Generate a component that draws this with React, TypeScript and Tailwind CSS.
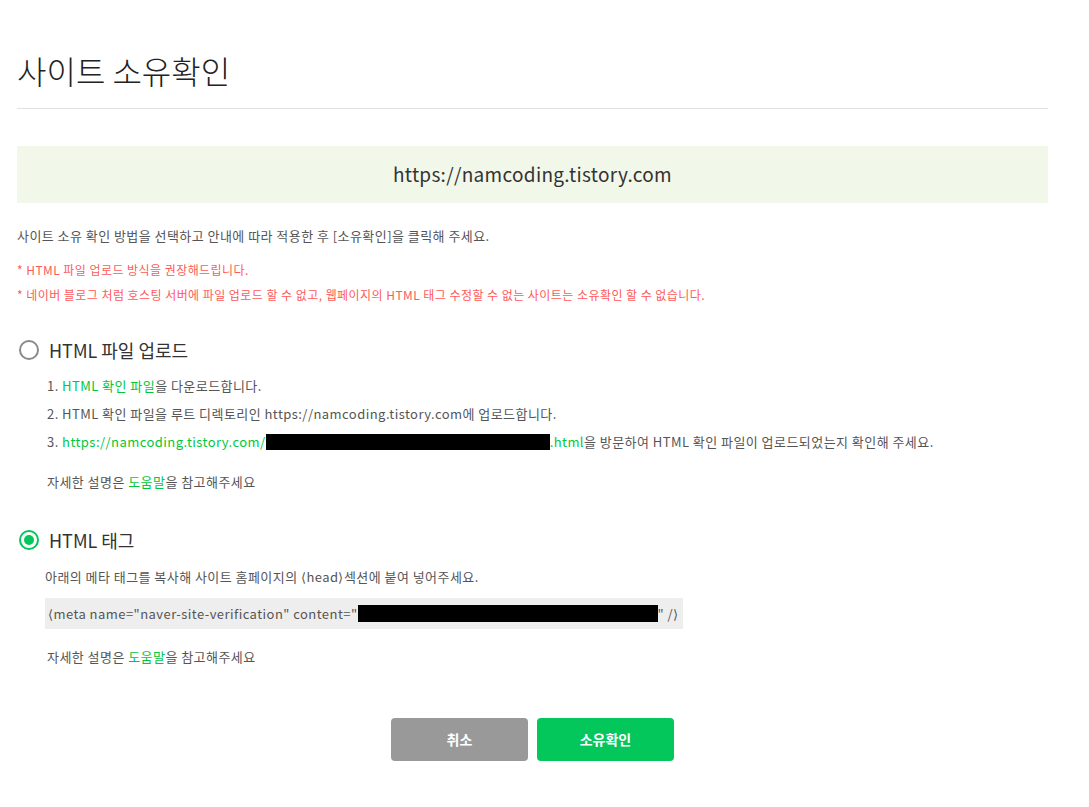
import React, { useState } from 'react';

type Method = 'file' | 'tag';

const SITE_URL = 'https://namcoding.tistory.com';

const Radio = ({ checked, onClick, label }: { checked: boolean; onClick: () => void; label: string }) => (
  <button onClick={onClick} className="flex items-center h-[24px] gap-[10px] pl-[2px]">
    {checked ? (
      <span className="w-[20px] h-[20px] rounded-full border-[2px] border-[#03c75a] flex items-center justify-center">
        <span className="w-[10px] h-[10px] rounded-full bg-[#03c75a]" />
      </span>
    ) : (
      <span className="w-[20px] h-[20px] rounded-full border-[2px] border-[#8a8a8a]" />
    )}
    <span className="text-[18px] text-[#333] leading-[24px]">{label}</span>
  </button>
);

const HelpLine = () => (
  <p className="text-[13px] leading-[20px] text-[#555] tracking-[0.45px]">
    자세한 설명은 <span className="text-[#00c73c]">도움말</span>을 참고해주세요
  </p>
);

export default function App() {
  const [method, setMethod] = useState<Method>('tag');

  return (
    <div
      className="bg-white min-h-screen pl-[17px] pr-[41px] pb-[40px]"
      style={{ fontFamily: '"Noto Sans CJK KR", "Noto Sans", sans-serif' }}
    >
      <div className="pt-[50px] pb-[18px] border-b border-[#e2e2e2]">
        <h1 className="text-[32px] leading-[40px] font-light text-[#222]">사이트 소유확인</h1>
      </div>

      <div className="mt-[37px] h-[57px] bg-[#f1f7e9] flex items-center justify-center">
        <span className="text-[19px] text-[#333] tracking-[0.3px]">{SITE_URL}</span>
      </div>

      <p className="mt-[23px] text-[13px] leading-[20px] text-[#555] tracking-[0.45px]">
        사이트 소유 확인 방법을 선택하고 안내에 따라 적용한 후 [소유확인]을 클릭해 주세요.
      </p>
      <p className="mt-[14px] text-[12px] leading-[20px] text-[#ff5a5a] tracking-[0.45px]">
        * HTML 파일 업로드 방식을 권장해드립니다.
      </p>
      <p className="mt-[5px] text-[12px] leading-[20px] text-[#ff5a5a] tracking-[0.45px]">
        * 네이버 블로그 처럼 호스팅 서버에 파일 업로드 할 수 없고, 웹페이지의 HTML 태그 수정할 수 없는 사이트는 소유확인 할 수 없습니다.
      </p>

      {/* HTML 파일 업로드 */}
      <div className="mt-[33px]">
        <Radio checked={method === 'file'} onClick={() => setMethod('file')} label="HTML 파일 업로드" />
        <ol className="mt-[10px] pl-[30px] text-[13px] leading-[28px] text-[#555] tracking-[0.45px]">
          <li>
            1. <span className="text-[#00c73c]">HTML 확인 파일</span>을 다운로드합니다.
          </li>
          <li>2. HTML 확인 파일을 루트 디렉토리인 {SITE_URL}에 업로드합니다.</li>
          <li className="flex items-center">
            <span>3.&nbsp;</span>
            <span className="text-[#00c73c]">{SITE_URL}/</span>
            <span className="inline-block w-[284px] h-[16px] bg-black" />
            <span className="text-[#00c73c]">.html</span>
            <span>을 방문하여 HTML 확인 파일이 업로드되었는지 확인해 주세요.</span>
          </li>
        </ol>
        <div className="mt-[16px] pl-[30px]">
          <HelpLine />
        </div>
      </div>

      {/* HTML 태그 */}
      <div className="mt-[36px]">
        <Radio checked={method === 'tag'} onClick={() => setMethod('tag')} label="HTML 태그" />
        <div className="pl-[28px]">
          <p className="mt-[15px] text-[13px] leading-[20px] text-[#555] tracking-[0.45px]">
            아래의 메타 태그를 복사해 사이트 홈페이지의 ⟨head⟩섹션에 붙여 넣어주세요.
          </p>
          <div className="mt-[11px] w-[638px] h-[31px] bg-[#eeeeee] flex items-center px-[3px] text-[13px] text-[#555] tracking-[0.45px]">
            <span>⟨meta name="naver-site-verification" content="</span>
            <span className="inline-block w-[300px] h-[17px] bg-black" />
            <span>" /⟩</span>
          </div>
          <div className="mt-[18px] pl-[2px]">
            <HelpLine />
          </div>
        </div>
      </div>

      <div className="mt-[51px] flex justify-center gap-[9px]">
        <button className="w-[137px] h-[43px] rounded-[4px] bg-[#999999] text-white text-[14px] font-bold">취소</button>
        <button className="w-[137px] h-[43px] rounded-[4px] bg-[#03c75a] text-white text-[14px] font-bold">소유확인</button>
      </div>
    </div>
  );
}
